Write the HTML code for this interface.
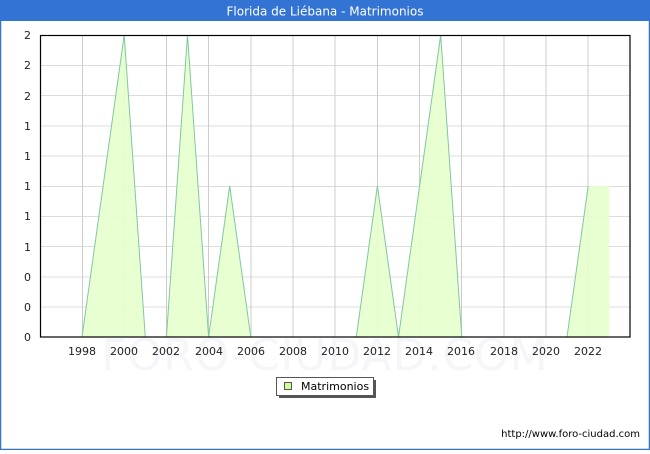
<!DOCTYPE html>
<html><head><meta charset="utf-8"><style>
html,body{margin:0;padding:0;background:#fff;}
body{width:650px;height:450px;overflow:hidden;font-family:"DejaVu Sans","Liberation Sans",sans-serif;}
</style></head><body>
<svg width="650" height="450" xmlns="http://www.w3.org/2000/svg" font-family="DejaVu Sans, Liberation Sans, sans-serif">
<rect x="0" y="0" width="650" height="450" fill="#fff"/>
<rect x="0.5" y="0.5" width="649" height="449" fill="none" stroke="#3373d4" stroke-width="1.5"/>
<rect x="0" y="0" width="650" height="21" fill="#3373d4"/>
<text x="325" y="15.5" text-anchor="middle" font-size="12" fill="#fff">Florida de Liébana - Matrimonios</text>
<text x="325" y="370" text-anchor="middle" font-size="44" fill="#f5f6f9" letter-spacing="1">FORO-CIUDAD.COM</text>
<g stroke="#dcdcdc" stroke-width="1">
<line x1="40" x2="630" y1="65.5" y2="65.5"/><line x1="40" x2="630" y1="95.5" y2="95.5"/><line x1="40" x2="630" y1="126" y2="126"/><line x1="40" x2="630" y1="156" y2="156"/><line x1="40" x2="630" y1="186.5" y2="186.5"/><line x1="40" x2="630" y1="216.5" y2="216.5"/><line x1="40" x2="630" y1="246.5" y2="246.5"/><line x1="40" x2="630" y1="277" y2="277"/><line x1="40" x2="630" y1="307" y2="307"/>
</g>
<g stroke="#cccccc" stroke-width="1">
<line y1="35" y2="337" x1="82.5" x2="82.5"/><line y1="35" y2="337" x1="124.5" x2="124.5"/><line y1="35" y2="337" x1="166.5" x2="166.5"/><line y1="35" y2="337" x1="208.5" x2="208.5"/><line y1="35" y2="337" x1="251" x2="251"/><line y1="35" y2="337" x1="293" x2="293"/><line y1="35" y2="337" x1="335" x2="335"/><line y1="35" y2="337" x1="377.5" x2="377.5"/><line y1="35" y2="337" x1="419.5" x2="419.5"/><line y1="35" y2="337" x1="461.5" x2="461.5"/><line y1="35" y2="337" x1="504" x2="504"/><line y1="35" y2="337" x1="546" x2="546"/><line y1="35" y2="337" x1="588" x2="588"/>
</g>
<polygon fill="#e6ffcc" fill-opacity="0.9" points="82,337 124.2,35 145.3,337 166.4,337 187.5,35 208.6,337 229.7,186 250.8,337 356.3,337 377.4,186 398.5,337 419.6,186 440.7,35 461.8,337 567,337 588.2,186 609.3,186 609.3,337"/>
<polyline fill="none" stroke="#80c8a0" stroke-width="1" points="82,337 124.2,35 145.3,337 166.4,337 187.5,35 208.6,337 229.7,186 250.8,337 356.3,337 377.4,186 398.5,337 419.6,186 440.7,35 461.8,337"/>
<polyline fill="none" stroke="#80c8a0" stroke-width="1" points="567,337 588.2,186"/>
<rect x="40.5" y="35.5" width="589.5" height="301.5" fill="none" stroke="#000" stroke-width="1.2"/>
<g font-size="11" fill="#222" text-anchor="end">
<text x="31" y="39">2</text><text x="31" y="69">2</text><text x="31" y="100">2</text><text x="31" y="130">1</text><text x="31" y="160">1</text><text x="31" y="190">1</text><text x="31" y="220">1</text><text x="31" y="251">1</text><text x="31" y="281">0</text><text x="31" y="311">0</text><text x="31" y="341">0</text>
</g>
<g font-size="11" fill="#222" text-anchor="middle">
<text x="82" y="355">1998</text><text x="124" y="355">2000</text><text x="166" y="355">2002</text><text x="209" y="355">2004</text><text x="251" y="355">2006</text><text x="293" y="355">2008</text><text x="335" y="355">2010</text><text x="377" y="355">2012</text><text x="419" y="355">2014</text><text x="461" y="355">2016</text><text x="504" y="355">2018</text><text x="546" y="355">2020</text><text x="588" y="355">2022</text>
</g>
<rect x="279" y="380" width="97" height="18" fill="#555"/>
<rect x="276.5" y="377.5" width="97" height="18" fill="#fff" stroke="#555" stroke-width="1"/>
<rect x="284.5" y="382.5" width="7" height="7" fill="#ccff99" stroke="#555" stroke-width="1"/>
<text x="301" y="390" font-size="11" fill="#000">Matrimonios</text>
<text x="640" y="437" text-anchor="end" font-size="10" fill="#000">http://www.foro-ciudad.com</text>
</svg>
</body></html>
